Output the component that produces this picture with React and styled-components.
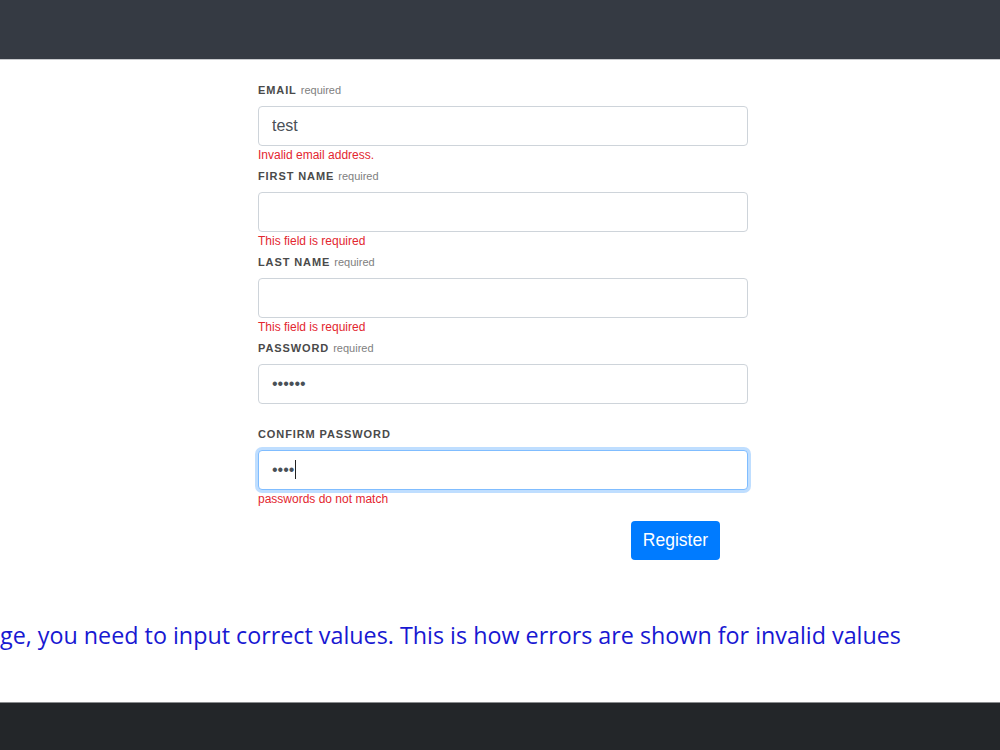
import { useEffect, useRef } from "react";
import styled, { createGlobalStyle } from "styled-components";

const GlobalStyle = createGlobalStyle`
  html, body {
    margin: 0;
    padding: 0;
    background: #ffffff;
  }
  body {
    font-family: "Liberation Sans", Arial, sans-serif;
  }
`;

const Page = styled.div`
  display: flex;
  flex-direction: column;
  height: 750px;
  overflow: hidden;
`;

const TopBar = styled.header`
  height: 59px;
  flex-shrink: 0;
  background: #353a43;
  border-bottom: 1px solid #c8cacd;
`;

const Main = styled.main`
  flex: 1;
  display: flex;
  flex-direction: column;
  padding-top: 22px;
  overflow: hidden;
`;

const Form = styled.form`
  width: 490px;
  margin-left: 258px;
  display: flex;
  flex-direction: column;
`;

const Field = styled.div`
  display: flex;
  flex-direction: column;
  margin-bottom: 4px;
`;

const Label = styled.label`
  height: 16px;
  line-height: 16px;
  margin-bottom: 8px;
  font-size: 11px;
  font-weight: bold;
  letter-spacing: 0.9px;
  color: #4a4a4a;
  text-transform: uppercase;

  span {
    margin-left: 4px;
    font-weight: normal;
    letter-spacing: 0;
    text-transform: none;
    color: #808080;
  }
`;

const InputWrap = styled.div`
  position: relative;
`;

const Input = styled.input`
  box-sizing: border-box;
  display: block;
  height: 40px;
  width: 100%;
  padding: 0 13px;
  border: 1px solid ${(p) => (p.$focused ? "#80bdff" : "#ced4da")};
  border-radius: 4px;
  box-shadow: ${(p) => (p.$focused ? "0 0 0 3px rgba(0, 123, 255, 0.25)" : "none")};
  font-family: "Liberation Sans", Arial, sans-serif;
  font-size: 16px;
  color: #495057;
  background: #fff;
  outline: none;
  caret-color: transparent;
`;

const Caret = styled.span`
  position: absolute;
  left: 37px;
  top: 10px;
  width: 1px;
  height: 19px;
  background: #222;
`;

const Error = styled.div`
  height: 18px;
  line-height: 18px;
  font-size: 12px;
  color: #e3262f;
`;

const Actions = styled.div`
  display: flex;
  justify-content: flex-end;
  padding-right: 28px;
  margin-top: 9px;
`;

const Button = styled.button`
  height: 39px;
  padding: 0 12px;
  border: none;
  border-radius: 4px;
  background: #007bff;
  color: #fff;
  font-family: "Liberation Sans", Arial, sans-serif;
  font-size: 17.5px;
  cursor: pointer;
`;

const Caption = styled.p`
  margin: 60px 0 0 0;
  white-space: nowrap;
  font-family: "Open Sans", "Noto Sans", sans-serif;
  font-size: 23.3px;
  line-height: 30px;
  color: #1818d2;
`;

const Footer = styled.footer`
  height: 47px;
  flex-shrink: 0;
  background: #232629;
  border-top: 1px solid #8a8c8e;
`;

const fields = [
  { name: "email", label: "Email", required: true, type: "text", value: "test", error: "Invalid email address." },
  { name: "first", label: "First Name", required: true, type: "text", value: "", error: "This field is required" },
  { name: "last", label: "Last Name", required: true, type: "text", value: "", error: "This field is required" },
  { name: "password", label: "Password", required: true, type: "password", value: "123456", error: "" },
  { name: "confirm", label: "Confirm Password", required: false, type: "password", value: "1234", error: "passwords do not match", focused: true },
];

export default function App() {
  const confirmRef = useRef(null);

  useEffect(() => {
    const el = confirmRef.current;
    if (el) {
      el.focus();
      el.setSelectionRange(el.value.length, el.value.length);
    }
  }, []);

  return (
    <>
      <GlobalStyle />
      <Page>
        <TopBar />
        <Main>
          <Form onSubmit={(e) => e.preventDefault()}>
            {fields.map((f) => (
              <Field key={f.name}>
                <Label htmlFor={f.name}>
                  {f.label}
                  {f.required && <span>required</span>}
                </Label>
                <InputWrap>
                  <Input
                    id={f.name}
                    type={f.type}
                    defaultValue={f.value}
                    $focused={f.focused}
                    ref={f.focused ? confirmRef : undefined}
                  />
                  {f.focused && <Caret />}
                </InputWrap>
                <Error>{f.error}</Error>
              </Field>
            ))}
            <Actions>
              <Button type="submit">Register</Button>
            </Actions>
          </Form>
          <Caption>
            ge, you need to input correct values. This is how errors are shown for invalid values
          </Caption>
        </Main>
        <Footer />
      </Page>
    </>
  );
}
